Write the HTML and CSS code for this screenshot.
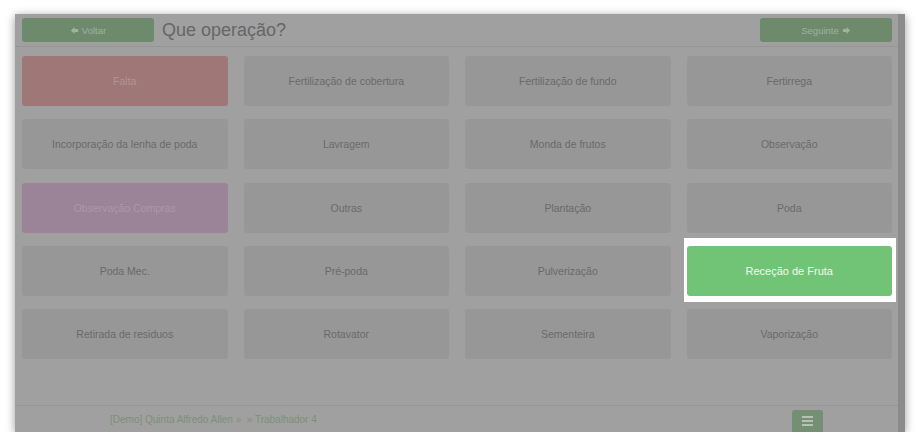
FILE: index.html
```html
<!DOCTYPE html>
<html lang="pt">
<head>
    <meta charset="UTF-8">
    <meta name="viewport" content="width=device-width, initial-scale=1.0">
    <title>Que operação?</title>
    <link rel="stylesheet" href="styles.css">
</head>
<body>
    <div class="window">
        <div class="page">
            <div class="header">
                <button class="btn-green btn-nav">
                    <svg class="arrow" viewBox="0 0 10 10"><path d="M1 5 L5 1 L5 3.3 L9 3.3 L9 6.7 L5 6.7 L5 9 Z"/></svg>
                    Voltar
                </button>
                <h1>Que operação?</h1>
                <button class="btn-green btn-nav next">
                    Seguinte
                    <svg class="arrow" viewBox="0 0 10 10"><path d="M9 5 L5 1 L5 3.3 L1 3.3 L1 6.7 L5 6.7 L5 9 Z"/></svg>
                </button>
            </div>

            <div class="tiles">
                <button class="tile red">Falta</button>
                <button class="tile">Fertilização de cobertura</button>
                <button class="tile">Fertilização de fundo</button>
                <button class="tile">Fertirrega</button>
                <button class="tile">Incorporação da lenha de poda</button>
                <button class="tile">Lavragem</button>
                <button class="tile">Monda de frutos</button>
                <button class="tile">Observação</button>
                <button class="tile purple">Observação Compras</button>
                <button class="tile">Outras</button>
                <button class="tile">Plantação</button>
                <button class="tile">Poda</button>
                <button class="tile">Poda Mec.</button>
                <button class="tile">Pré-poda</button>
                <button class="tile">Pulverização</button>
                <div class="spot">
                    <button class="tile green">Receção de Fruta</button>
                </div>
                <button class="tile">Retirada de residuos</button>
                <button class="tile">Rotavator</button>
                <button class="tile">Sementeira</button>
                <button class="tile">Vaporização</button>
            </div>

            <div class="footer">
                <span class="crumbs">[Demo] Quinta Alfredo Allen &raquo; &nbsp;&raquo; Trabalhador 4</span>
                <button class="btn-green menu">
                    <span></span><span></span><span></span>
                </button>
            </div>
        </div>
        <div class="scrollbar"></div>
    </div>
</body>
</html>
```

FILE: styles.css
```css
body {
    margin: 0;
    background-color: #ffffff;
    font-family: 'Liberation Sans', Arial, sans-serif;
}
.window {
    display: flex;
    width: 890px;
    height: 418px;
    margin: 14px 0 0 15px;
    background-color: #a0a0a0;
    box-shadow: 0 2px 9px rgba(0, 0, 0, 0.4);
}
.page {
    flex: 1;
    display: flex;
    flex-direction: column;
}
.scrollbar {
    width: 7px;
    background-color: #8b8b8b;
}
button {
    font-family: inherit;
    border: none;
    cursor: pointer;
}
.btn-green {
    background-color: #6e8a6c;
    color: #a1b19f;
    border-radius: 3px;
}
.header {
    display: flex;
    align-items: center;
    height: 32px;
    padding: 0 6px 0 7px;
    border-bottom: 1px solid #969696;
}
.btn-nav {
    width: 132px;
    height: 24px;
    font-size: 9.5px;
    display: flex;
    align-items: center;
    justify-content: center;
    gap: 3px;
}
.arrow {
    width: 9px;
    height: 9px;
    fill: #a1b19f;
}
.next {
    margin-left: auto;
}
.header h1 {
    margin: 0 0 0 8px;
    font-size: 18px;
    font-weight: normal;
    color: #666666;
}
.tiles {
    display: grid;
    grid-template-columns: repeat(4, 1fr);
    grid-auto-rows: 50px;
    column-gap: 16px;
    row-gap: 13.3px;
    padding: 9px 6px 0 7px;
}
.tile {
    background-color: #979797;
    color: #6a6a6a;
    font-size: 10.5px;
    border-radius: 3px;
}
.tile.red {
    background-color: #9f7777;
    color: #b39595;
}
.tile.purple {
    background-color: #9b8498;
    color: #ab98a8;
}
.spot {
    display: flex;
    margin: -8px -4px -6px -3px;
    padding: 8px 4px 6px 3px;
    background-color: #ffffff;
}
.tile.green {
    flex: 1;
    background-color: #71c475;
    color: #f2f8f1;
    font-size: 11px;
}
.footer {
    margin-top: auto;
    height: 26px;
    border-top: 1px solid #969696;
    display: flex;
    align-items: flex-end;
    padding-right: 75px;
}
.crumbs {
    margin-left: 95px;
    margin-bottom: 7px;
    font-size: 10px;
    color: #7a9177;
}
.menu {
    margin-left: auto;
    width: 31px;
    height: 22px;
    border-radius: 3px 3px 0 0;
    background-color: #758f75;
    display: flex;
    flex-direction: column;
    align-items: center;
    justify-content: center;
    gap: 2px;
}
.menu span {
    width: 11px;
    height: 2px;
    background-color: #b5c1b3;
}
```
